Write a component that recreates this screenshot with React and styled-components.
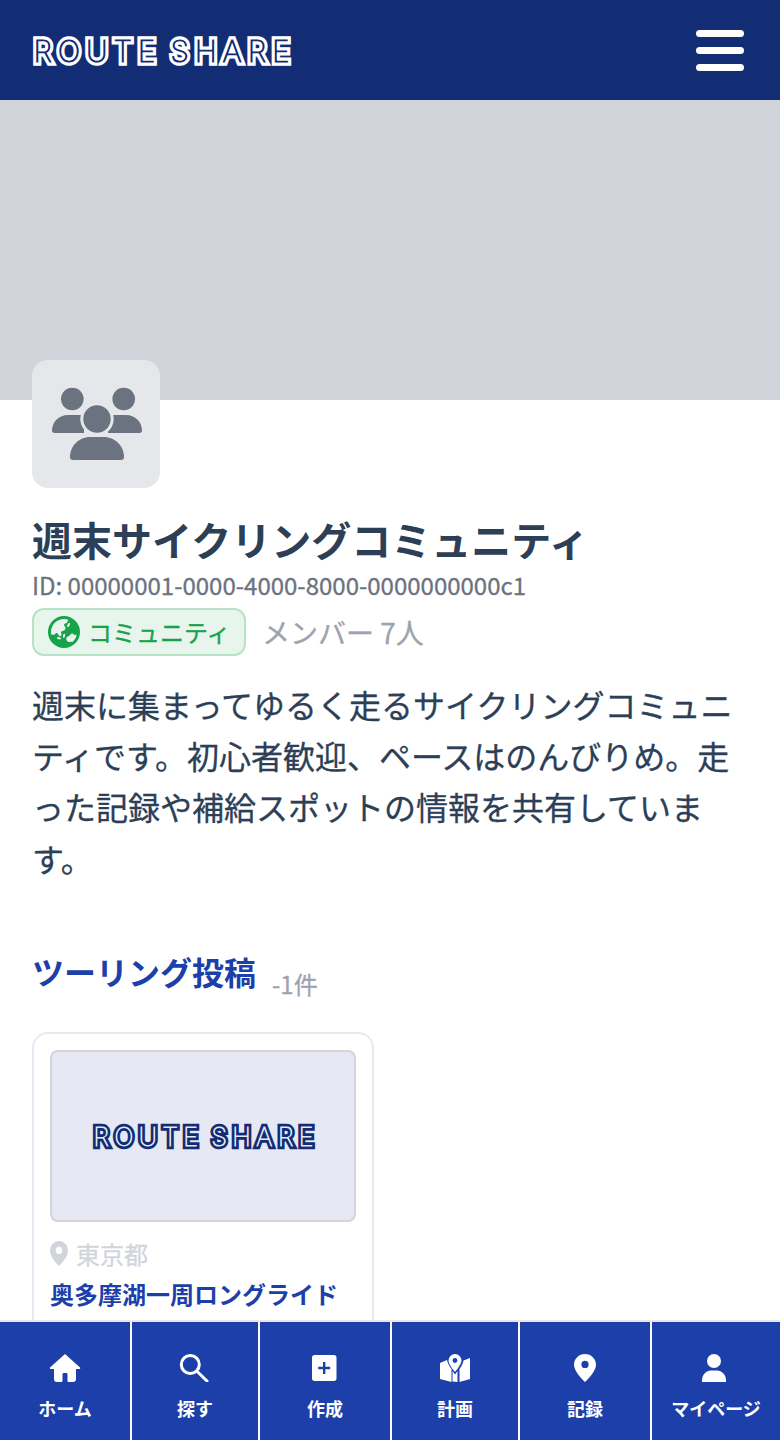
import React from 'react';
import styled, { createGlobalStyle, css } from 'styled-components';
import { FaEarthAsia } from 'react-icons/fa6';

const GlobalStyle = createGlobalStyle`
  html, body {
    margin: 0;
    padding: 0;
    background: #fff;
  }
  body {
    font-family: 'Noto Sans CJK JP', 'Noto Sans', sans-serif;
  }
`;

// regular weight, thickened a little without changing the glyph widths
const bodyText = css`
  font-weight: 400;
  -webkit-text-stroke: 0.3px currentColor;
`;

const Page = styled.div`
  width: 780px;
  height: 1440px;
  overflow: hidden;
  position: relative;
`;

const Header = styled.header`
  height: 100px;
  background: #132d74;
  display: flex;
  align-items: center;
  justify-content: space-between;
  padding: 0 36px 0 32px;
`;

const LogoSvg = styled.svg`
  display: block;
  overflow: visible;
  text {
    font-family: 'Inter', 'Lato', sans-serif;
    font-weight: 100;
    font-size: 30px;
    word-spacing: -5px;
    stroke-linejoin: miter;
    stroke-miterlimit: 2;
  }
`;

const MenuButton = styled.div`
  width: 48px;
  display: flex;
  flex-direction: column;
  gap: 10px;
`;

const MenuBar = styled.span`
  display: block;
  height: 7px;
  border-radius: 4px;
  background: #fff;
`;

const Banner = styled.div`
  height: 300px;
  background: #d1d5db;
`;

const Content = styled.main`
  padding: 0 32px;
`;

const Avatar = styled.div`
  width: 128px;
  height: 128px;
  margin-top: -40px;
  position: relative;
  background: #e5e7eb;
  border-radius: 16px;
  display: flex;
  align-items: center;
  justify-content: center;
`;

const Title = styled.h1`
  margin: 23px 0 0;
  font-size: 40px;
  line-height: 56px;
  font-weight: 700;
  color: #2d3f57;
`;

const IdText = styled.div`
  ${bodyText}
  font-size: 24px;
  line-height: 36px;
  color: #6b7280;
`;

const MetaRow = styled.div`
  margin-top: 5px;
  display: flex;
  align-items: center;
  gap: 16px;
`;

const Badge = styled.div`
  ${bodyText}
  height: 48px;
  box-sizing: border-box;
  width: 214px;
  padding-left: 14px;
  display: flex;
  align-items: center;
  gap: 8px;
  border: 2px solid #b5e3c6;
  border-radius: 12px;
  background: #e8f5ec;
  color: #16a34a;
  font-size: 24px;
  span {
    margin-bottom: 2px;
  }
`;

const MemberCount = styled.span`
  ${bodyText}
  font-size: 28px;
  color: #9ca3af;
`;

const Description = styled.p`
  ${bodyText}
  margin: 23px 0 0;
  font-size: 32px;
  line-height: 51.2px;
  color: #2d3f57;
`;

const SectionHead = styled.div`
  margin-top: 63px;
  display: flex;
  align-items: flex-start;
  gap: 16px;
`;

const SectionTitle = styled.h2`
  margin: 0;
  font-size: 32px;
  line-height: 48px;
  font-weight: 700;
  color: #1c3faa;
`;

const SectionCount = styled.span`
  ${bodyText}
  margin-top: 19px;
  font-size: 24px;
  line-height: 36px;
  color: #9ca3af;
`;

const Card = styled.article`
  margin-top: 30px;
  width: 342px;
  min-height: 340px;
  box-sizing: border-box;
  padding: 16px;
  border: 2px solid #e5e9f3;
  border-radius: 16px;
  background: #fff;
`;

const Thumb = styled.div`
  height: 172px;
  box-sizing: border-box;
  border: 2px solid #d1d5db;
  border-radius: 8px;
  background: #e6e9f3;
  display: flex;
  align-items: center;
  justify-content: center;
`;

const Place = styled.div`
  ${bodyText}
  margin-top: 15px;
  display: flex;
  align-items: center;
  gap: 8px;
  font-size: 24px;
  line-height: 34px;
  color: #d1d5db;
`;

const CardTitle = styled.h3`
  margin: 5px 0 0;
  font-size: 24px;
  line-height: 36px;
  font-weight: 700;
  color: #1c3faa;
  white-space: nowrap;
`;

const BottomNav = styled.nav`
  position: absolute;
  left: 0;
  right: 0;
  bottom: 0;
  height: 120px;
  box-sizing: border-box;
  border-top: 2px solid #e5e7eb;
  background: #fff;
  display: grid;
  grid-template-columns: 130px 126px 130px 126px 130px 128px;
  column-gap: 2px;
`;

const NavItem = styled.a`
  background: #1c3faa;
  color: #fff;
  display: flex;
  flex-direction: column;
  align-items: center;
  padding-top: 32px;
  font-size: 18px;
  line-height: 26px;
  font-weight: 700;
  white-space: nowrap;
`;

const NavIcon = styled.svg`
  width: 32px;
  height: 28px;
  margin-bottom: 13px;
  fill: #fff;
  flex: none;
`;

// inline-shaded wordmark: a heavy stroke of the text with a thin line of the same text on top
const Logo = ({ id, width, fill, line, inner }) => (
  <LogoSvg width={width} height={(width * 30) / 259} viewBox="0 0 259 30">
    <defs>
      <text id={id} x="1.500" y="26.500" textLength="256" lengthAdjust="spacing">
        ROUTE SHARE
      </text>
    </defs>
    <use href={`#${id}`} fill={fill} stroke={fill} strokeWidth="7.500" />
    <use href={`#${id}`} fill={line} stroke={line} strokeWidth={inner} />
  </LogoSvg>
);

const GroupIcon = () => (
  <svg width="94" height="76" viewBox="0 0 94 76" fill="#6b7280">
    <circle cx="23.300" cy="13" r="11.300" />
    <circle cx="74.700" cy="13" r="11.300" />
    <path d="M3 44.500C3 36 10 29 19 29h16v18H5.500C4 47 3 46 3 44.500z" />
    <path d="M93 44.500C93 36 86 29 77 29H59v18h31.500c1.500 0 2.500-1 2.500-2.500z" />
    <circle cx="48" cy="33" r="15.200" stroke="#e5e7eb" strokeWidth="3" />
    <path d="M21 71c0-11 9-20 20-20h14c11 0 20 9 20 20 0 2-1 3-3 3H24c-2 0-3-1-3-3z" />
  </svg>
);

const PlacePin = () => (
  <svg width="18" height="25" viewBox="0 0 22 28" fill="currentColor" preserveAspectRatio="none">
    <path fillRule="evenodd" d="M11 0C4.900 0 0 4.800 0 10.800 0 17.500 8 25 11 28c3-3 11-10.500 11-17.200C22 4.800 17.100 0 11 0zm0 6.500a4 4 0 1 1 0 8 4 4 0 0 1 0-8z" />
  </svg>
);

const navItems = [
  {
    label: 'ホーム',
    icon: <path d="M16 0 31 13.500c.6.500.2 1.500-.6 1.500H27v10c0 2-1 3-3 3h-4c-1 0-1.500-.5-1.500-1.500v-6c0-1-.5-1.500-1.500-1.500h-2c-1 0-1.500.5-1.500 1.500v6c0 1-.5 1.500-1.500 1.500H8c-2 0-3-1-3-3V15H1.600c-.8 0-1.200-1-.6-1.500z" />,
  },
  {
    label: '探す',
    icon: (
      <g fill="none" stroke="#fff" strokeWidth="3" strokeLinecap="round">
        <circle cx="11.300" cy="10.500" r="9" />
        <path d="M18.200 17.500 28 27" />
      </g>
    ),
  },
  {
    label: '作成',
    icon: <path fillRule="evenodd" d="M5.500 1H25c1.500 0 2.500 1 2.500 2.500v21c0 1.500-1 2.500-2.500 2.500H5.500C4 27 3 26 3 24.500v-21C3 2 4 1 5.500 1zM14 8v4.800H9.200v2.400H14V20h2.400v-4.800h4.800v-2.400h-4.800V8z" />,
  },
  {
    label: '計画',
    icon: <path fillRule="evenodd" d="M16 0a6.500 6.500 0 0 1 6.500 6.500c0 3.200-4 8.600-6.500 11.500-2.500-2.900-6.500-8.300-6.500-11.500A6.500 6.500 0 0 1 16 0zm0 4.100a2.400 2.400 0 1 0 0 4.800 2.400 2.400 0 0 0 0-4.800zM1 9l7-3c.6 3 3 7 4.500 9v13L1 25zM13.500 17l2.500 3.500 2.500-3.500v11l-5-.5zM20.500 15c1.500-2 3.500-5 4-8.500L31 4v21l-10.500 3z" />,
  },
  {
    label: '記録',
    icon: <path fillRule="evenodd" d="M16 0C9.900 0 5 4.800 5 10.800 5 17.500 13 25 16 28c3-3 11-10.500 11-17.200C27 4.800 22.100 0 16 0zm0 6.800a3.600 3.600 0 1 1 0 7.200 3.600 3.600 0 0 1 0-7.200z" />,
  },
  {
    label: 'マイページ',
    icon: (
      <>
        <circle cx="14" cy="7" r="7" />
        <path d="M2 26c0-5 4-9.500 9-9.500h6c5 0 9 4.500 9 9.500v2H2z" />
      </>
    ),
  },
];

export default function App() {
  return (
    <>
      <GlobalStyle />
      <Page>
        <Header>
          <Logo id="logo-header" width={259} fill="#fff" line="#132d74" inner={1.2} />
          <MenuButton>
            <MenuBar />
            <MenuBar />
            <MenuBar />
          </MenuButton>
        </Header>
        <Banner />
        <Content>
          <Avatar>
            <GroupIcon />
          </Avatar>
          <Title>週末サイクリングコミュニティ</Title>
          <IdText>ID: 00000001-0000-4000-8000-0000000000c1</IdText>
          <MetaRow>
            <Badge>
              <FaEarthAsia size={32} />
              <span>コミュニティ</span>
            </Badge>
            <MemberCount>メンバー 7人</MemberCount>
          </MetaRow>
          <Description>
            週末に集まってゆるく走るサイクリングコミュニティです。初心者歓迎、ペースはのんびりめ。走った記録や補給スポットの情報を共有しています。
          </Description>
          <SectionHead>
            <SectionTitle>ツーリング投稿</SectionTitle>
            <SectionCount>-1件</SectionCount>
          </SectionHead>
          <Card>
            <Thumb>
              <Logo id="logo-card" width={223} fill="#132d74" line="#e6e9f3" inner={0.9} />
            </Thumb>
            <Place>
              <PlacePin />
              東京都
            </Place>
            <CardTitle>奥多摩湖一周ロングライド</CardTitle>
          </Card>
        </Content>
        <BottomNav>
          {navItems.map((item) => (
            <NavItem key={item.label}>
              <NavIcon viewBox="0 0 32 28">{item.icon}</NavIcon>
              {item.label}
            </NavItem>
          ))}
        </BottomNav>
      </Page>
    </>
  );
}
